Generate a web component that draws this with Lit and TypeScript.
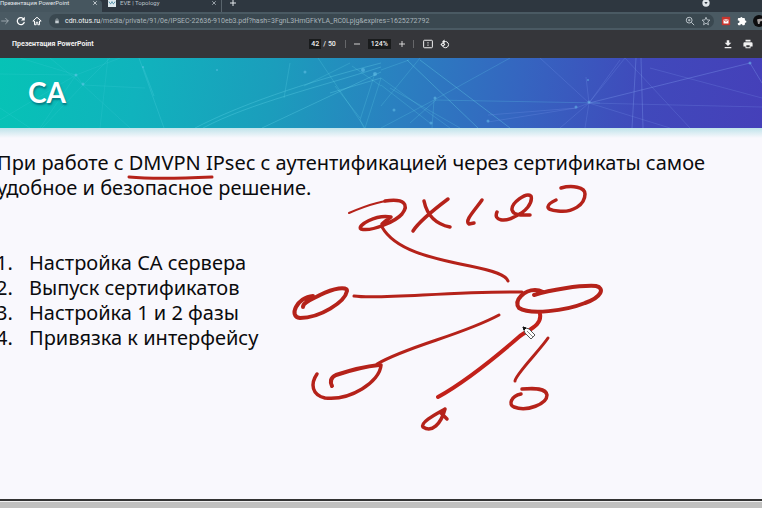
import { LitElement, html, svg, css } from "lit";
import { customElement } from "lit/decorators.js";

const STEPS = ["Настройка CA сервера", "Выпуск сертификатов", "Настройка 1 и 2 фазы", "Привязка к интерфейсу"];

const icon = (body: unknown, size = 10) =>
  html`<svg width=${size} height=${size} viewBox="0 0 24 24" aria-hidden="true">${body}</svg>`;

const cross = svg`<path d="M5 5 19 19M19 5 5 19" fill="none" stroke="currentColor" stroke-width="3"/>`;

@customElement("browser-chrome")
class BrowserChrome extends LitElement {
  static styles = css`
    :host { display: block; font-family: Roboto, sans-serif; font-size: 7px; color: #e3e8eb; }
    button { border: 0; padding: 0; background: none; color: inherit; font: inherit; display: flex; align-items: center; justify-content: center; }
    svg { display: block; }
    .tabs { display: flex; height: 12px; background: #2e3740; font-size: 6px; }
    .tab { display: flex; height: 12px; box-sizing: border-box; padding-bottom: 6px; align-items: center; justify-content: space-between; }
    .tab.active { width: 102px; padding-right: 4px; background: #46565f; border-radius: 0 4px 0 0; }
    .tab.other { width: 120px; padding: 0 4px 6px 6px; color: #b9c2c8; border-right: 1px solid #59646c; }
    .tab span { line-height: 6px; white-space: nowrap; }
    .name { display: flex; align-items: center; gap: 4px; }
    .plus { height: 6px; margin-left: 7px; }
    .dot { margin: 0 52px 0 auto; height: 6px; }
    .bar { display: flex; align-items: center; height: 18px; background: #4a5a63; }
    .nav { display: flex; gap: 6px; width: 49px; }
    .omni { display: flex; flex: 1; align-items: center; min-width: 0; height: 14px; padding: 0 3px 0 5px; border-radius: 7px; background: #3a4850; }
    .omni label { margin-left: 5px; color: #f2f5f6; }
    .omni input { flex: 1; min-width: 0; padding: 0; border: 0; outline: 0; background: none; color: #a9b4ba; font: inherit; height: 12px; }
    .tools { display: flex; gap: 6px; color: #b9c2c8; }
    .ext { display: flex; align-items: center; gap: 6px; margin-left: 7px; width: 41px; overflow: hidden; color: #fff; }
    .ext button { flex: none; }
  `;
  render() {
    return html`
      <div class="tabs">
        <div class="tab active"><span>Презентация PowerPoint</span><button aria-label="Закрыть">${icon(cross, 6)}</button></div>
        <div class="tab other">
          <span class="name">${icon(svg`<path fill="#dfe9ee" d="M0 0h24v24H0z"/><path d="M3 8c4 8 6 8 9 0 3 8 5 8 9 0" fill="none" stroke="#3a7f9c" stroke-width="3"/>`, 8)}EVE | Topology</span>
          <button aria-label="Закрыть">${icon(cross, 6)}</button>
        </div>
        <button class="plus" aria-label="Новая вкладка">${icon(svg`<path d="M12 3v18M3 12h18" stroke="currentColor" stroke-width="3"/>`, 8)}</button>
        <button class="dot" aria-label="Поиск вкладок">${icon(svg`<circle cx="12" cy="12" r="11" fill="#dfe4e8"/><path d="M7 9h10l-5 7z" fill="#2e3740"/>`, 8)}</button>
      </div>
      <div class="bar">
        <div class="nav">
          <button aria-label="Вперёд">${icon(svg`<path d="M3 12h17M13 5l7 7-7 7" fill="none" stroke="#aab4ba" stroke-width="2"/>`)}</button>
          <button aria-label="Обновить">${icon(svg`<path d="M19 8a8.500 8.500 0 1 0 1 6" fill="none" stroke="#fff" stroke-width="3"/><path d="M21 2v9h-9z" fill="#fff"/>`)}</button>
          <button aria-label="Домой">${icon(svg`<path d="M2 12 12 3l10 9h-4v9h-4v-6h-4v6H6v-9z" fill="none" stroke="#fff" stroke-width="2.400"/>`)}</button>
        </div>
        <div class="omni">
          ${icon(svg`<path d="M5 10h14v11H5z" fill="#c5cdd2"/><path d="M8 10V7a4 4 0 0 1 8 0v3" fill="none" stroke="#c5cdd2" stroke-width="2.500"/>`, 6)}
          <label for="url">cdn.otus.ru</label>
          <input id="url" value="/media/private/91/0e/IPSEC-22636-910eb3.pdf?hash=3FgnL3HmGFkYLA_RC0Lpjg&expires=1625272792" />
          <div class="tools">
            <button aria-label="Масштаб">${icon(svg`<circle cx="10" cy="10" r="7" fill="none" stroke="currentColor" stroke-width="2.400"/><path d="m15 15 7 7M10 7v6M7 10h6" stroke="currentColor" stroke-width="2.400"/>`)}</button>
            <button aria-label="Закладка">${icon(svg`<path d="m12 3 2.700 6.300 6.800.600-5.200 4.500 1.600 6.600-5.900-3.600L6.100 21l1.600-6.600-5.200-4.500 6.800-.600z" fill="none" stroke="currentColor" stroke-width="2.200"/>`)}</button>
          </div>
        </div>
        <div class="ext">
          <button aria-label="Почта">${icon(svg`<path d="M2 2h20v20H2z" fill="#c8352e"/><path d="M6 8h12v10H6z" fill="#fff"/><path d="m6 8 6 5 6-5" fill="none" stroke="#c8352e" stroke-width="2"/>`)}</button>
          <button aria-label="Расширения">${icon(svg`<path d="M20 11h-1V7a2 2 0 0 0-2-2h-4V4a3 3 0 0 0-5 0v1H4a2 2 0 0 0-2 2v4h1a3 3 0 0 1 0 6H2v3a2 2 0 0 0 2 2h4v-1a3 3 0 0 1 5 0v1h4a2 2 0 0 0 2-2v-4h1a2.500 2.500 0 0 0 0-5z" fill="#fff"/>`)}</button>
          <button aria-label="Профиль">${icon(svg`<circle cx="12" cy="12" r="12" fill="#0d0d0f"/><path d="M8 9c3-2 8-2 12-1l-1 4-5 1-1 5h-3l-1-5z" fill="#a8a2a2"/>`, 12)}</button>
        </div>
      </div>`;
  }
}

@customElement("pdf-toolbar")
class PdfToolbar extends LitElement {
  static styles = css`
    :host { display: grid; grid-template-columns: 1fr auto 1fr; align-items: center; height: 28px; padding: 0 9px 0 12px; background: #35363a; color: #f1f1f1; font: 500 7px Roboto, sans-serif; }
    h1 { margin: 0; font: 700 7px Roboto, sans-serif; }
    button { border: 0; padding: 0; background: none; color: inherit; }
    svg { display: block; }
    .mid, .right { display: flex; align-items: center; }
    .mid { gap: 7px; margin-right: 6px; }
    .right { justify-content: flex-end; gap: 10px; }
    .page { display: flex; align-items: center; gap: 2px; margin-right: 2px; }
    input { box-sizing: border-box; height: 10px; padding: 0; border: 0; background: #191b1c; color: inherit; font: inherit; text-align: center; }
    .num { width: 12px; }
    .zoom { width: 23px; }
    .sep { width: 1px; height: 8px; background: #66676a; }
    .fit { margin-left: 2px; }
  `;
  render() {
    return html`
      <h1>Презентация PowerPoint</h1>
      <div class="mid">
        <div class="page"><input class="num" aria-label="Страница" value="42" /><span>/</span><span>50</span></div>
        <i class="sep"></i>
        <button aria-label="Уменьшить">${icon(svg`<path d="M3 12h18" stroke="currentColor" stroke-width="2.500"/>`, 8)}</button>
        <input class="zoom" aria-label="Масштаб" value="124%" />
        <button aria-label="Увеличить">${icon(svg`<path d="M3 12h18M12 3v18" stroke="currentColor" stroke-width="2.500"/>`, 8)}</button>
        <i class="sep"></i>
        <button class="fit" aria-label="По размеру страницы">${icon(svg`<rect x="1.500" y="3" width="21" height="18" rx="2" fill="none" stroke="currentColor" stroke-width="2.400"/><path d="m9.500 10 2.500-3 2.500 3zM9.500 14l2.500 3 2.500-3z" fill="currentColor"/>`)}</button>
        <button aria-label="Повернуть">${icon(svg`<path d="M9 6h4a7.500 7.500 0 1 1-6 12" fill="none" stroke="currentColor" stroke-width="2.400"/><path d="m11 1-6 5 6 5zM1 13l6-6 6 6-6 6z" fill="currentColor"/><path d="m4.500 13 2.500-2.500L9.500 13 7 15.500z" fill="#35363a"/>`)}</button>
      </div>
      <div class="right">
        <button aria-label="Скачать">${icon(svg`<path d="M9 3h6v6h5l-8 8-8-8h5zM4 19h16v3H4z" fill="currentColor"/>`)}</button>
        <button aria-label="Печать">${icon(svg`<path d="M6 2h12v4H6zM4 8h16a3 3 0 0 1 3 3v7h-5v4H6v-4H1v-7a3 3 0 0 1 3-3zm4 7v5h8v-5z" fill="currentColor" fill-rule="evenodd"/>`)}</button>
      </div>`;
  }
}

@customElement("slide-banner")
class SlideBanner extends LitElement {
  static styles = css`
    :host { position: relative; display: flex; align-items: center; height: 70px; padding-left: 28px; background: linear-gradient(98deg, #06c3b6 0%, #10b3bd 18%, #1b9dbc 36%, #2a80c0 52%, #3565c0 68%, #4049bb 84%, #4540b9 100%); }
    .net { position: absolute; inset: 0; width: 100%; height: 100%; }
    h2 { position: relative; margin: 0; padding-bottom: 2px; color: #fff; font: 700 28px/36px Lato, sans-serif; text-shadow: 1px 2px 2px rgba(0, 60, 80, 0.5); }
  `;
  render() {
    return html`
      <svg class="net" viewBox="0 0 762 70" preserveAspectRatio="none" aria-hidden="true">
        <g fill="none" stroke="#6fe0f0" stroke-width="1">
          <path stroke-opacity=".12" d="M0 16 76 17 40 70M76 17 20 0M76 17 120 0M83 27 42 70M83 27 130 70M83 27 110 0M76 17 0 62M108 0 100 70M0 50 30 70M83 27 145 30M76 17 83 27 50 0"/>
          <path stroke-opacity=".2" d="M139 0 164 70M143 9 154 38"/>
          <path stroke-opacity=".28" d="M195 70C240 47 300 26 381 5M203 70C250 45 320 29 381 9M262 70 381 14M330 35 381 20"/>
          <path stroke-opacity=".2" d="M318 0 365 70M375 15 360 62 364 70M381 20 365 70M352 8 381 28M335 28 360 60M290 5 284 40M350 5 304 28M420 0 381 48M409 2 381 12"/>
          <path stroke-opacity=".3" d="M407 2 478 70M420 2 510 70"/>
          <path stroke-opacity=".2" d="M381 20 450 70M381 27 430 65M434 42 510 0M434 42 381 70M434 42 432 70M434 42 600 45M390 30 460 70M410 65 436 42"/>
        </g>
        <g fill="none" stroke="#85a4f4" stroke-width="1">
          <path stroke-opacity=".2" d="M488 64 576 50 589 45 625 0M589 45 620 2M589 45 560 70M589 45 585 70M589 45 670 70M589 45 540 0M589 45 762 49M576 50 488 57M589 45 586 19M625 0 690 70M650 10 762 40"/>
          <path stroke-opacity=".32" d="M636 0 632 70M641 0 643 70M589 45 750 5 762 25"/>
        </g>
        <g fill="#6cc8ee" fill-opacity=".5">
          <circle cx="76" cy="17" r="1.500"/><circle cx="83" cy="26" r="1.500"/><circle cx="143" cy="9" r="1"/><circle cx="217" cy="12" r="1"/><circle cx="305" cy="14" r="1.500"/><circle cx="363" cy="12" r="2"/><circle cx="375" cy="16" r="2"/><circle cx="394" cy="52" r="1.500"/><circle cx="435" cy="40" r="1.500"/><circle cx="431" cy="65" r="1.500"/><circle cx="488" cy="63" r="1.500"/><circle cx="576" cy="49" r="1.500"/><circle cx="589" cy="44" r="1.500"/><circle cx="588" cy="22" r="1"/><circle cx="750" cy="5" r="1.500"/>
        </g>
      </svg>
      <h2>CA</h2>`;
  }
}

@customElement("app-root")
class AppRoot extends LitElement {
  static styles = css`
    :host { display: flex; flex-direction: column; min-height: 100vh; background: #f9f8fd; }
    .slide { position: relative; flex: 1; overflow: hidden; color: #0b0b0d; font: 20px/25px "Noto Sans", sans-serif; }
    .shade { height: 10px; background: linear-gradient(#bfe3ea, #f9f8fd); }
    p { margin: 12px 0 50px -3px; max-width: 740px; }
    ol { margin: 0 0 0 -4px; padding: 0; list-style: none; }
    li { display: flex; }
    .no { width: 33px; }
    .ink { position: absolute; left: 0; top: -128px; pointer-events: none; }
    .foot { height: 7px; border-top: 2px solid #333; background: #c1c1c0; box-shadow: inset 0 1px #f1f1f1; }
  `;
  render() {
    return html`
      <browser-chrome></browser-chrome>
      <pdf-toolbar></pdf-toolbar>
      <slide-banner></slide-banner>
      <main class="slide">
        <div class="shade"></div>
        <p>При работе с DMVPN IPsec с аутентификацией через сертификаты самое удобное и безопасное решение.</p>
        <ol>${STEPS.map((s, i) => html`<li><span class="no">${i + 1}.</span><span>${s}</span></li>`)}</ol>
        <svg class="ink" width="762" height="500" viewBox="0 0 762 500" aria-hidden="true">
          <g fill="none" stroke="#b5221a" stroke-width="3.500" stroke-linecap="round" stroke-linejoin="round">
            <path stroke-width="3" d="M129 177C150 179 190 178 212 177"/>
            <path stroke-width="2" d="M349 213C365 206 385 200 398 200"/>
            <path d="M385 201C405 198 409 205 402 214C396 221 372 232 361 229C356 226 376 214 391 217C389 219 386 220 382 224"/>
            <path d="M424 201C427 215 435 224 450 227M448 199C436 208 420 220 413 231"/>
            <path d="M482 200C475 210 464 221 469 224L474 223"/>
            <path d="M497 212C493 221 505 222 514 217C526 212 533 203 531 196C526 192 511 203 512 210C514 216 522 215 530 215"/>
            <path d="M561 188C572 185 585 187 585 194C585 205 572 213 558 211C543 210 547 204 556 200"/>
            <path stroke-width="3" d="M382 227C395 250 430 258 470 266C495 271 506 275 508 281"/>
            <path stroke-width="3" d="M354 296C380 300 450 291 522 292"/>
            <path stroke-width="4" d="M303 307C303 302 313 299 320 295C334 288 347 286 347 291C345 302 320 318 300 318C288 317 297 297 313 296"/>
            <path stroke-width="4" d="M534 295C550 290 580 285 596 286C605 288 602 297 585 303C565 311 530 315 519 308C513 300 525 290 535 290C539 290 541 291 543 292"/>
            <path stroke-width="3" d="M499 315C460 336 410 345 377 364"/>
            <path d="M317 374C310 384 312 395 325 398C350 401 380 382 381 365"/>
            <path stroke-width="4" d="M379 365C360 367 345 372 336 375C330 378 330 382 332 386"/>
            <path stroke="#c2211a" stroke-width="4" d="M540 314C542 325 530 329 520 336C490 362 465 382 438 397"/>
            <path d="M445 409C438 413 420 422 423 427C432 433 441 424 445 409M440 412 447 419"/>
            <path stroke-width="3" d="M548 338C540 350 515 375 515 381"/>
            <path d="M521 394C511 396 508 405 514 407C527 412 547 404 547 395C546 388 535 388 522 389"/>
          </g>
          <path d="m523 327 6 2 6 6-4 4-6-6z" fill="#fff" stroke="#555" stroke-width="1"/>
          <path d="m523 327 3 1-2 2z" fill="#111" stroke="#111"/>
          <path d="m527 331 6 6" stroke="#888"/>
        </svg>
      </main>
      <div class="foot"></div>`;
  }
}
